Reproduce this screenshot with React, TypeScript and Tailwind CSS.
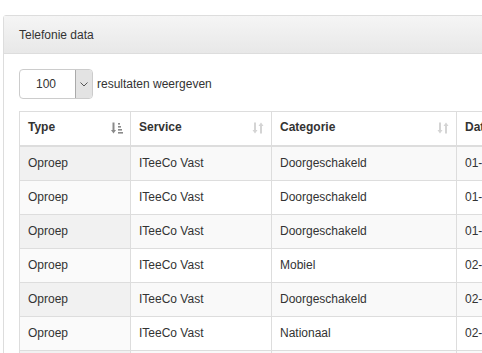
import React from "react";

const rows = [
  ["Oproep", "ITeeCo Vast", "Doorgeschakeld", "01-"],
  ["Oproep", "ITeeCo Vast", "Doorgeschakeld", "01-"],
  ["Oproep", "ITeeCo Vast", "Doorgeschakeld", "01-"],
  ["Oproep", "ITeeCo Vast", "Mobiel", "02-"],
  ["Oproep", "ITeeCo Vast", "Doorgeschakeld", "02-"],
  ["Oproep", "ITeeCo Vast", "Nationaal", "02-"],
  ["Oproep", "ITeeCo Vast", "Nationaal", "02-"],
];

function SortAsc() {
  return (
    <svg width="12" height="12" viewBox="0 0 12 12" className="block">
      <path d="M2.5 0.5 V9" stroke="#8a8a8a" strokeWidth="2" />
      <path d="M0 8 L2.5 11.5 L5 8 Z" fill="#8a8a8a" />
      <rect x="7" y="1" width="2" height="1.6" fill="#8a8a8a" />
      <rect x="7" y="4" width="3" height="1.6" fill="#8a8a8a" />
      <rect x="7" y="7" width="4" height="1.6" fill="#8a8a8a" />
      <rect x="7" y="10" width="5" height="1.6" fill="#8a8a8a" />
    </svg>
  );
}

function SortBoth() {
  return (
    <svg width="12" height="12" viewBox="0 0 12 12" className="block">
      <path d="M3 0.5 V9" stroke="#d4d4d4" strokeWidth="2" />
      <path d="M0.5 8 L3 11.5 L5.5 8 Z" fill="#d4d4d4" />
      <path d="M9 3 V11.5" stroke="#d4d4d4" strokeWidth="2" />
      <path d="M6.5 4 L9 0.5 L11.5 4 Z" fill="#d4d4d4" />
    </svg>
  );
}

export default function App() {
  return (
    <div
      className="w-[482px] h-[353px] overflow-hidden bg-white text-[#333] text-[12px]"
      style={{ fontFamily: '"Liberation Sans", Arial, sans-serif' }}
    >
      <div className="ml-[3px] mt-[15px] w-[560px] border border-[#ddd] rounded-tl-[3px]">
        <div className="h-[38px] flex items-center pl-[15px] border-b border-[#ddd] bg-gradient-to-b from-[#f5f5f5] to-[#e8e8e8]">
          Telefonie data
        </div>
        <div className="pt-[15px] pl-[15px]">
          <div className="flex items-center h-[30px]">
            <div className="flex w-[74px] h-[30px] border border-[#ccc] rounded-[4px] overflow-hidden bg-white">
              <div className="flex-1 flex items-center pl-[16px]">100</div>
              <div className="w-[17px] flex items-center justify-center bg-[#e3e3e3] border-l border-[#aaa]">
                <svg width="8" height="5" viewBox="0 0 8 5">
                  <path d="M0.5 0.5 L4 4 L7.5 0.5" stroke="#555" strokeWidth="1" fill="none" />
                </svg>
              </div>
            </div>
            <span className="ml-[4px]">resultaten weergeven</span>
          </div>
          <table className="mt-[12px] table-fixed border-collapse border border-[#ddd] w-[540px] leading-[17.14px]">
            <colgroup>
              <col className="w-[111px]" />
              <col className="w-[141px]" />
              <col className="w-[185px]" />
              <col className="w-[103px]" />
            </colgroup>
            <thead>
              <tr className="h-[34px] border-b-2 border-[#ddd]">
                <th className="text-left font-bold px-[8px] pb-[1px] border-r border-[#ddd]">
                  <div className="flex items-center justify-between">
                    <span>Type</span>
                    <span className="mr-[-1px]"><SortAsc /></span>
                  </div>
                </th>
                <th className="text-left font-bold px-[8px] pb-[1px] border-r border-[#ddd]">
                  <div className="flex items-center justify-between">
                    <span>Service</span>
                    <span className="mr-[-1px]"><SortBoth /></span>
                  </div>
                </th>
                <th className="text-left font-bold px-[8px] pb-[1px] border-r border-[#ddd]">
                  <div className="flex items-center justify-between">
                    <span>Categorie</span>
                    <span className="mr-[-1px]"><SortBoth /></span>
                  </div>
                </th>
                <th className="text-left font-bold px-[8px] pb-[1px]">
                  <div className="flex items-center justify-between">
                    <span>Datum</span>
                    <SortBoth />
                  </div>
                </th>
              </tr>
            </thead>
            <tbody>
              {rows.map((r, i) => {
                const odd = i % 2 === 0;
                return (
                  <tr
                    key={i}
                    className={`border-b border-[#ddd] ${odd ? "bg-[#f9f9f9]" : "bg-white"}`}
                  >
                    <td className={`px-[8px] py-[8px] border-r border-[#ddd] ${odd ? "bg-[#f1f1f1]" : "bg-[#fafafa]"}`}>
                      {r[0]}
                    </td>
                    <td className="px-[8px] py-[8px] border-r border-[#ddd]">{r[1]}</td>
                    <td className="px-[8px] py-[8px] border-r border-[#ddd]">{r[2]}</td>
                    <td className="px-[8px] py-[8px]">{r[3]}</td>
                  </tr>
                );
              })}
            </tbody>
          </table>
        </div>
      </div>
    </div>
  );
}
